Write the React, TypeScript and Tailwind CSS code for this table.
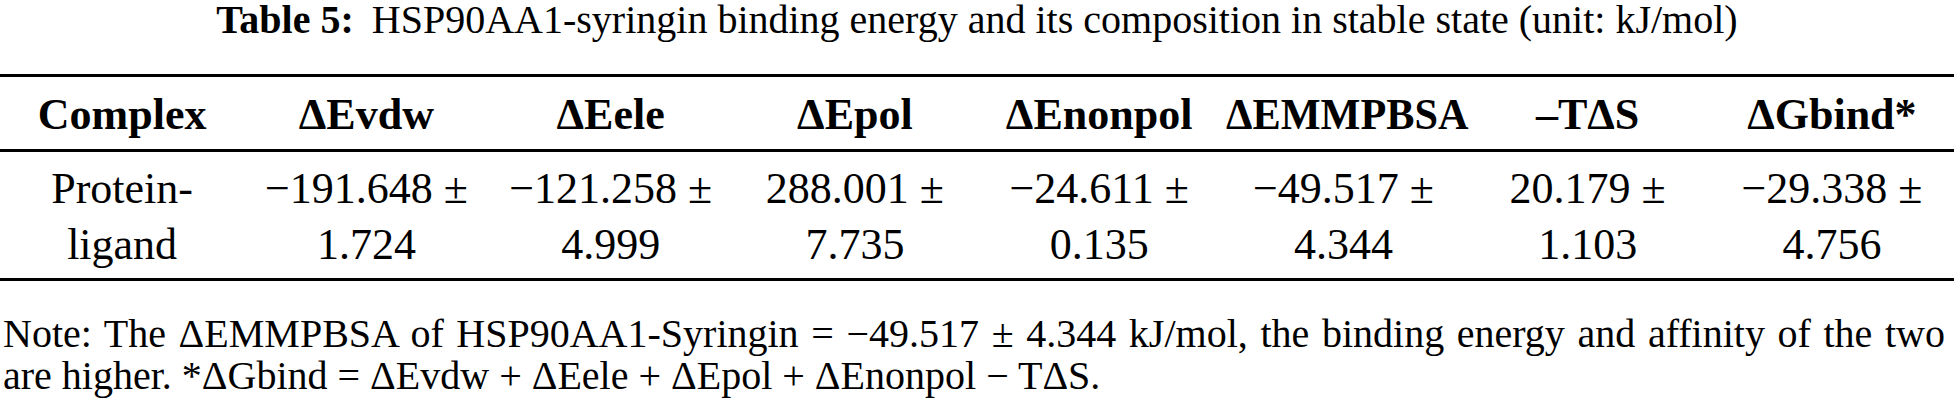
import React from 'react';

const headers = ['Complex', 'ΔEvdw', 'ΔEele', 'ΔEpol', 'ΔEnonpol', 'ΔEMMPBSA', '–TΔS', 'ΔGbind*'];

// each cell is two lines, as wrapped in the printed table
const cells: [string, string][] = [
  ['Protein-', 'ligand'],
  ['−191.648 ±', '1.724'],
  ['−121.258 ±', '4.999'],
  ['288.001 ±', '7.735'],
  ['−24.611 ±', '0.135'],
  ['−49.517 ±', '4.344'],
  ['20.179 ±', '1.103'],
  ['−29.338 ±', '4.756'],
];

const App: React.FC = () => {
  return (
    <div className="w-[1954px] h-[407px] overflow-hidden bg-white text-black font-['Liberation_Serif',serif]">
      <p className="text-center text-[40px] leading-[38px] pt-[1px]">
        <span className="font-bold mr-[18px]">Table 5:</span>
        HSP90AA1-syringin binding energy and its composition in stable state (unit: kJ/mol)
      </p>

      <div className="mt-[35px]">
        <div className="grid grid-cols-8 border-t-[3px] border-b-[3px] border-black">
          {headers.map((h) => (
            <div key={h} className="text-center text-[44px] leading-[48px] font-bold pt-[14px] pb-[10px] whitespace-nowrap">
              {h === 'ΔEMMPBSA' ? <span className="inline-block scale-x-[0.96]">{h}</span> : h}
            </div>
          ))}
        </div>
        <div className="grid grid-cols-8 border-b-[3px] border-black pt-[9px] pb-[5px]">
          {cells.map(([a, b]) => (
            <div key={a + b} className="text-center text-[44px] leading-[56px] whitespace-nowrap">
              {a}
              <br />
              {b}
            </div>
          ))}
        </div>
      </div>

      <div className="text-[40px] leading-[42px] pl-[3px] pr-[9px] mt-[32px]">
        <p className="whitespace-nowrap text-justify [text-align-last:justify]">
          Note: The ΔEMMPBSA of HSP90AA1-Syringin = −49.517 ± 4.344 kJ/mol, the binding energy and affinity of the two
        </p>
        <p>are higher. *ΔGbind = ΔEvdw + ΔEele + ΔEpol + ΔEnonpol − TΔS.</p>
      </div>
    </div>
  );
};

export default App;
